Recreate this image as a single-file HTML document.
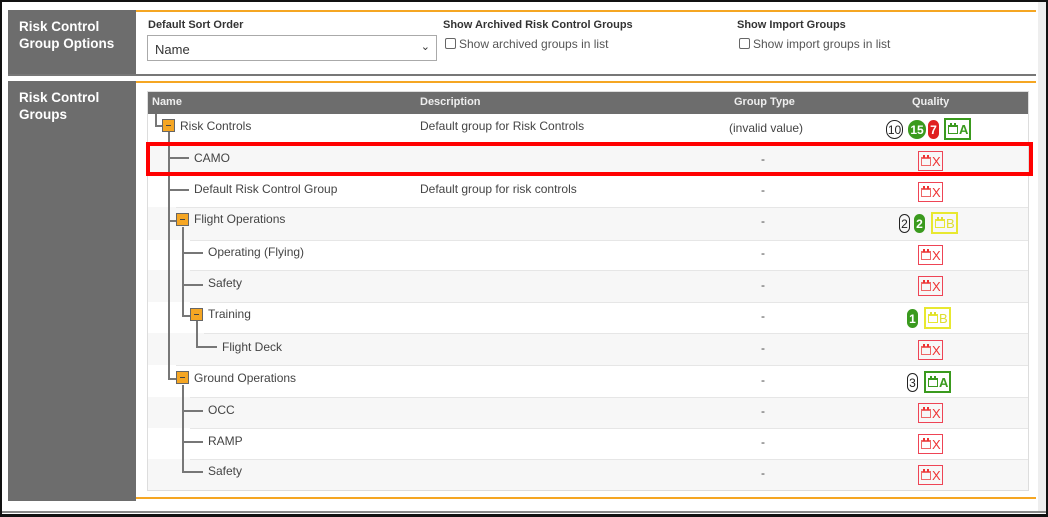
<!DOCTYPE html>
<html><head><meta charset="utf-8"><style>
*{box-sizing:border-box;margin:0;padding:0}
body{width:1048px;height:517px;position:relative;background:#fff;font-family:"Liberation Sans",Arial,sans-serif;overflow:hidden;color:#333}
.a{position:absolute}
.side{background:#6d6d6d;color:#fff;font-weight:bold;font-size:13.5px;line-height:17px;padding:8px 11px}
.lbl{font-size:11px;font-weight:bold;color:#333}
.t{font-size:12px;color:#444;white-space:nowrap}
.hl{background:#777}
.box{position:absolute;width:13px;height:13px;background:#f5a623;border:1px solid #666}
.box:after{content:"";position:absolute;left:3px;top:5px;width:5px;height:1px;background:#444}
.qx{position:absolute;width:25px;height:20px;border:1px solid #e45;font-size:13px;color:#e33;display:flex;align-items:center;padding-left:13px}
.cal{position:absolute;left:2px;top:5px;width:10px;height:9px;border:1px solid #e66;border-top-width:2px}
.cal:before,.cal:after{content:"";position:absolute;top:-4px;width:2px;height:3px;background:currentColor}
.cal:before{left:1px}.cal:after{right:1px}
.pill{position:absolute;height:19px;border-radius:9px;font-size:12px;display:flex;align-items:center;justify-content:center;font-weight:bold}
</style></head><body>
<div class="a" style="left:0;top:0;width:1048px;height:517px;border:2px solid #111;border-bottom-width:3px"></div>
<div class="a" style="left:1038px;top:2px;width:8px;height:510px;background:#eee"></div>
<div class="a" style="left:2px;top:511px;width:1044px;height:2px;background:#888"></div>
<div class="a side" style="left:8px;top:10px;width:128px;height:65px">Risk Control<br>Group Options</div>
<div class="a" style="left:136px;top:10px;width:900px;height:2px;background:#f5a623"></div>
<div class="a" style="left:8px;top:74px;width:1028px;height:2px;background:#777"></div>
<div class="a lbl" style="left:148px;top:19px">Default Sort Order</div>
<div class="a" style="left:147px;top:35px;width:290px;height:26px;border:1px solid #aaa;font-size:13px;color:#333;padding:6px 7px">Name<span style="position:absolute;right:6px;top:4px;font-size:11px">&#8964;</span></div>
<div class="a lbl" style="left:443px;top:19px">Show Archived Risk Control Groups</div>
<div class="a t" style="left:445px;top:37px;color:#555"><span style="display:inline-block;width:11px;height:11px;border:1px solid #666;border-radius:2px;vertical-align:-1px;margin-right:3px"></span>Show archived groups in list</div>
<div class="a lbl" style="left:737px;top:19px">Show Import Groups</div>
<div class="a t" style="left:739px;top:37px;color:#555"><span style="display:inline-block;width:11px;height:11px;border:1px solid #666;border-radius:2px;vertical-align:-1px;margin-right:3px"></span>Show import groups in list</div>
<div class="a side" style="left:8px;top:81px;width:128px;height:420px">Risk Control<br>Groups</div>
<div class="a" style="left:136px;top:81px;width:900px;height:2px;background:#f5a623"></div>
<div class="a" style="left:136px;top:497px;width:900px;height:2px;background:#f5a623"></div>
<div class="a" style="left:147px;top:91px;width:882px;height:400px;border:1px solid #ddd"></div>
<div class="a" style="left:148px;top:92px;width:880px;height:22px;background:#6d6d6d;color:#eee;font-size:11px;font-weight:bold;line-height:20px">
<span class="a" style="left:4px">Name</span><span class="a" style="left:272px">Description</span><span class="a" style="left:586px">Group Type</span><span class="a" style="left:764px">Quality</span></div>
<div class="a" style="left:148px;top:145px;width:880px;height:30px;background:#f7f7f7"></div>
<div class="a" style="left:148px;top:207px;width:880px;height:33px;background:#f7f7f7"></div>
<div class="a" style="left:148px;top:270px;width:880px;height:32px;background:#f7f7f7"></div>
<div class="a" style="left:148px;top:333px;width:880px;height:32px;background:#f7f7f7"></div>
<div class="a" style="left:148px;top:397px;width:880px;height:31px;background:#f7f7f7"></div>
<div class="a" style="left:148px;top:459px;width:880px;height:31px;background:#f7f7f7"></div>
<div class="a" style="left:176px;top:207px;width:852px;height:1px;background:#e6e6e6"></div>
<div class="a" style="left:190px;top:240px;width:838px;height:1px;background:#e6e6e6"></div>
<div class="a" style="left:190px;top:270px;width:838px;height:1px;background:#e6e6e6"></div>
<div class="a" style="left:190px;top:302px;width:838px;height:1px;background:#e6e6e6"></div>
<div class="a" style="left:204px;top:333px;width:824px;height:1px;background:#e6e6e6"></div>
<div class="a" style="left:176px;top:365px;width:852px;height:1px;background:#e6e6e6"></div>
<div class="a" style="left:190px;top:397px;width:838px;height:1px;background:#e6e6e6"></div>
<div class="a" style="left:190px;top:428px;width:838px;height:1px;background:#e6e6e6"></div>
<div class="a" style="left:190px;top:459px;width:838px;height:1px;background:#e6e6e6"></div>
<div class="a hl" style="left:155px;top:114px;width:2px;height:13px"></div>
<div class="a hl" style="left:155px;top:125px;width:8px;height:2px"></div>
<div class="a hl" style="left:168px;top:131px;width:2px;height:249px"></div>
<div class="a hl" style="left:168px;top:157px;width:21px;height:2px"></div>
<div class="a hl" style="left:168px;top:189px;width:21px;height:2px"></div>
<div class="a hl" style="left:168px;top:220px;width:8px;height:2px"></div>
<div class="a hl" style="left:168px;top:378px;width:8px;height:2px"></div>
<div class="a hl" style="left:182px;top:227px;width:2px;height:90px"></div>
<div class="a hl" style="left:182px;top:252px;width:21px;height:2px"></div>
<div class="a hl" style="left:182px;top:284px;width:21px;height:2px"></div>
<div class="a hl" style="left:182px;top:315px;width:8px;height:2px"></div>
<div class="a hl" style="left:196px;top:321px;width:2px;height:27px"></div>
<div class="a hl" style="left:196px;top:346px;width:21px;height:2px"></div>
<div class="a hl" style="left:182px;top:385px;width:2px;height:88px"></div>
<div class="a hl" style="left:182px;top:410px;width:21px;height:2px"></div>
<div class="a hl" style="left:182px;top:441px;width:21px;height:2px"></div>
<div class="a hl" style="left:182px;top:471px;width:21px;height:2px"></div>
<div class="box" style="left:162px;top:119px"></div>
<div class="box" style="left:176px;top:213px"></div>
<div class="box" style="left:190px;top:308px"></div>
<div class="box" style="left:176px;top:371px"></div>
<div class="a t" style="left:180px;top:119px">Risk Controls</div>
<div class="a t" style="left:194px;top:151px">CAMO</div>
<div class="a t" style="left:194px;top:182px">Default Risk Control Group</div>
<div class="a t" style="left:194px;top:212px">Flight Operations</div>
<div class="a t" style="left:208px;top:245px">Operating (Flying)</div>
<div class="a t" style="left:208px;top:276px">Safety</div>
<div class="a t" style="left:208px;top:307px">Training</div>
<div class="a t" style="left:222px;top:340px">Flight Deck</div>
<div class="a t" style="left:194px;top:371px">Ground Operations</div>
<div class="a t" style="left:208px;top:403px">OCC</div>
<div class="a t" style="left:208px;top:434px">RAMP</div>
<div class="a t" style="left:208px;top:464px">Safety</div>
<div class="a t" style="left:420px;top:119px">Default group for Risk Controls</div>
<div class="a t" style="left:420px;top:182px">Default group for risk controls</div>
<div class="a t" style="left:729px;top:121px">(invalid value)</div>
<div class="a t" style="left:761px;top:152px">-</div>
<div class="a t" style="left:761px;top:183px">-</div>
<div class="a t" style="left:761px;top:214px">-</div>
<div class="a t" style="left:761px;top:246px">-</div>
<div class="a t" style="left:761px;top:278px">-</div>
<div class="a t" style="left:761px;top:309px">-</div>
<div class="a t" style="left:761px;top:341px">-</div>
<div class="a t" style="left:761px;top:373px">-</div>
<div class="a t" style="left:761px;top:404px">-</div>
<div class="a t" style="left:761px;top:435px">-</div>
<div class="a t" style="left:761px;top:466px">-</div>
<div class="pill" style="left:886px;top:120px;width:17px;border:1px solid #222;color:#222;font-weight:normal">10</div>
<div class="pill" style="left:908px;top:120px;width:18px;background:#3a9a1e;color:#fff">15</div>
<div class="pill" style="left:928px;top:120px;width:11px;background:#e02020;color:#fff">7</div>
<div class="qx" style="left:944px;top:118px;width:27px;height:22px;border:2px solid #3a9a1e;color:#3a9a1e;font-weight:bold"><span class="cal" style="border-color:#3a9a1e"></span>A</div>
<div class="pill" style="left:899px;top:214px;width:11px;border:1px solid #222;color:#222;font-weight:normal">2</div>
<div class="pill" style="left:914px;top:214px;width:11px;background:#3a9a1e;color:#fff">2</div>
<div class="qx" style="left:931px;top:212px;width:27px;height:22px;border:2px solid #e8e830;color:#dede30"><span class="cal" style="border-color:#e8e830"></span>B</div>
<div class="pill" style="left:907px;top:309px;width:11px;background:#3a9a1e;color:#fff">1</div>
<div class="qx" style="left:924px;top:307px;width:27px;height:22px;border:2px solid #e8e830;color:#dede30"><span class="cal" style="border-color:#e8e830"></span>B</div>
<div class="pill" style="left:907px;top:373px;width:11px;border:1px solid #222;color:#222;font-weight:normal">3</div>
<div class="qx" style="left:924px;top:371px;width:27px;height:22px;border:2px solid #3a9a1e;color:#3a9a1e;font-weight:bold"><span class="cal" style="border-color:#3a9a1e"></span>A</div>
<div class="qx" style="left:918px;top:151px"><span class="cal"></span>X</div>
<div class="qx" style="left:918px;top:182px"><span class="cal"></span>X</div>
<div class="qx" style="left:918px;top:245px"><span class="cal"></span>X</div>
<div class="qx" style="left:918px;top:276px"><span class="cal"></span>X</div>
<div class="qx" style="left:918px;top:340px"><span class="cal"></span>X</div>
<div class="qx" style="left:918px;top:403px"><span class="cal"></span>X</div>
<div class="qx" style="left:918px;top:434px"><span class="cal"></span>X</div>
<div class="qx" style="left:918px;top:465px"><span class="cal"></span>X</div>
<div class="a" style="left:146px;top:142px;width:887px;height:34px;border:4px solid #f00"></div>
</body></html>
